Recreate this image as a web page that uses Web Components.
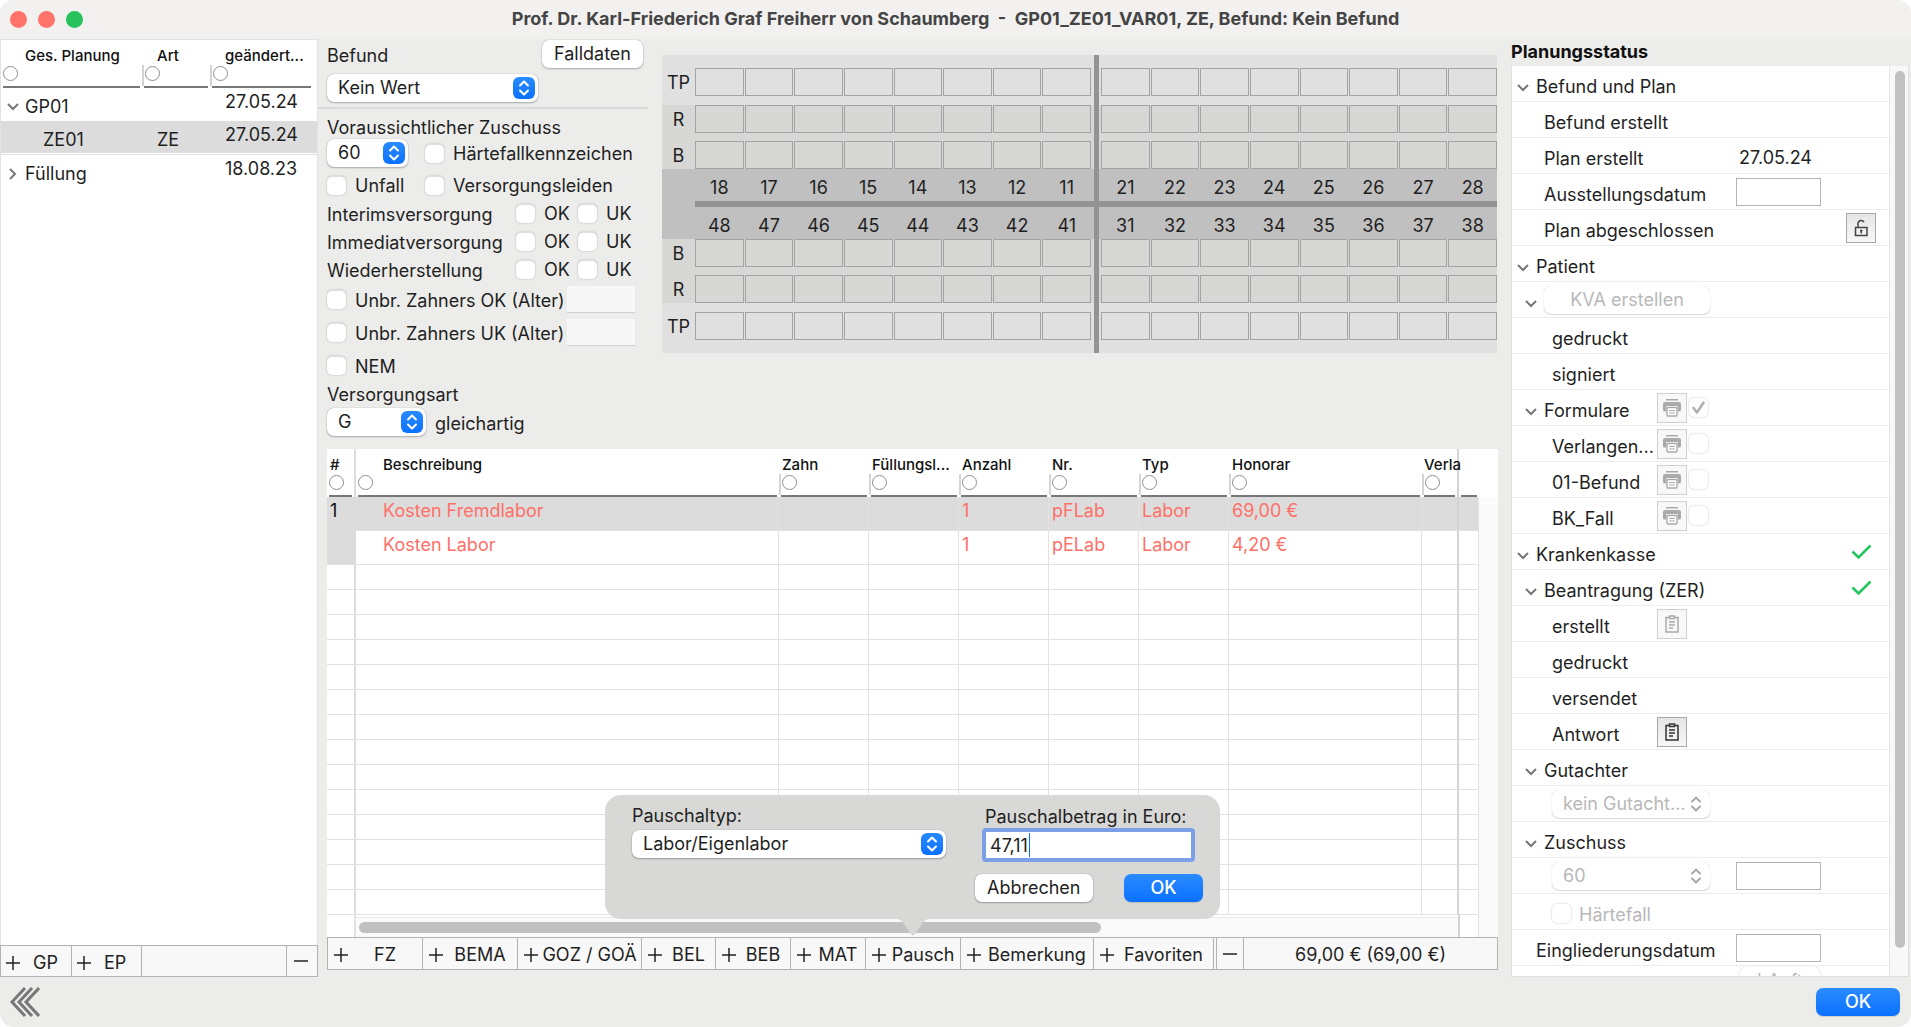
<!DOCTYPE html>
<html lang="de">
<head>
<meta charset="utf-8">
<title>Planung</title>
<style>
html, body { margin: 0; height: 100%; background: #fff; }
body { font: 18px/22px Inter, "Liberation Sans", sans-serif; color: #1f1f1f; }
</style>
</head>
<body>
<plan-window></plan-window>
<script>
const shared = `
*, *::before, *::after { box-sizing: border-box; }
button, input, select { font: inherit; color: inherit; margin: 0; }
button { border: 0; background: none; padding: 0; }
svg { display: block; flex: none; }
.btn { height: 28px; border-radius: 7px; background: #fff; box-shadow: 0 0 1px #0005, 0 1px 2px #0004; padding: 0 12px; white-space: nowrap; }
.btn.primary { background: linear-gradient(#2a8bff, #0a71ff); color: #fff; font-weight: 500; box-shadow: 0 1px 1px #0002; }
.btn:disabled { color: #b8b8b8; box-shadow: 0 0 1px #0004, 0 1px 1px #0002; }
input[type=checkbox] { appearance: none; flex: none; display: block; width: 19px; height: 19px; border-radius: 5px; background: #fff; box-shadow: inset 0 1px 1px #0002, 0 0 2px #0004; }
input[type=checkbox]:disabled { box-shadow: 0 0 2px #0004; }
:focus { outline: none; }
`;
function define(name, css, html, setup) {
  const t = document.createElement('template');
  t.innerHTML = `<style>${shared}${css}</style>${html}`;
  customElements.define(name, class extends HTMLElement {
    constructor() {
      super();
      this.attachShadow({ mode: 'open' });
    }
    connectedCallback() {
      if (this.shadowRoot.childNodes.length) return;
      this.shadowRoot.append(t.content.cloneNode(true));
      if (setup) setup.call(this, this.shadowRoot);
    }
  });
}

/* Icons */
const icons = {
  '': '',
  open: '<svg width="12" height="8" viewBox="0 0 12 8" fill="none" stroke="#777" stroke-width="2"><path d="M1 1l5 5 5-5"/></svg>',
  closed: '<svg width="12" height="12" viewBox="0 0 12 12" fill="none" stroke="#777" stroke-width="2"><path d="M3 1l5 5-5 5"/></svg>',
  printer: '<svg width="20" height="20" viewBox="0 0 20 20"><path d="M4 1h12v1.500H4z" fill="#aaa"/><path d="M3 4h14a2 2 0 0 1 2 2v6a1.500 1.500 0 0 1-1.500 1.500H16V8H4v5.500H2.500A1.500 1.500 0 0 1 1 12V6a2 2 0 0 1 2-2z" fill="#aaa"/><path d="M5 9.500h10V17a1 1 0 0 1-1 1H6a1 1 0 0 1-1-1z" fill="#fff" stroke="#aaa" stroke-width="1.400"/><path d="M7 12.500h6M7 15h6" stroke="#aaa" stroke-width="1.200"/></svg>',
  clip: '<svg width="18" height="20" viewBox="0 0 18 20" fill="none" stroke="currentColor" stroke-width="1.500"><path d="M6 3.500H3V18h12V3.500h-3"/><path d="M6.500 2h5v2.500h-5z"/><path d="M6 8h6M6 11h6M6 14h4" /></svg>',
  lock: '<svg width="18" height="20" viewBox="0 0 18 20" fill="none" stroke="#444" stroke-width="1.500"><path d="M3.500 9.500h11.500v8H3.500z"/><path d="M6 9.500V5.500A3 3 0 0 1 9 2.500c1.500 0 2.500.6 3 1.800"/><path d="M8 12.500h2.500M9.250 12.500v3"/></svg>',
  done: '<svg width="21" height="16" viewBox="0 0 21 16" fill="none" stroke="#22c55e" stroke-width="2.600"><path d="M1.500 7.500l6 6L19.500 1.500"/></svg>'
};
define('ui-icon', ':host { display: inline-flex; flex: none; align-items: center; justify-content: center; }', '', function (r) {
  r.innerHTML += icons[this.getAttribute('name') || ''];
});

/* Pop-up menu frame round a slotted select */
define('pop-select', `
:host { display: inline-grid; position: relative; flex: none; }
::slotted(select) { appearance: none; height: 28px; width: 100%; border: 0; border-radius: 7px; background: #fff; box-shadow: 0 0 1px #0005, 0 1px 2px #0004; padding: 0 20px 0 11px; font: inherit; color: inherit; text-overflow: ellipsis; opacity: 1; outline: none; }
.knob { position: absolute; right: 3px; top: 3px; width: 22px; height: 22px; border-radius: 6px; background: linear-gradient(#2a8bff, #0a71ff); color: #fff; display: grid; place-items: center; pointer-events: none; }
:host([dim]) { color: #b8b8b8; }
:host([dim]) .knob { background: none; color: #aaa; }
:host([dim]) ::slotted(select) { box-shadow: 0 0 1px #0004, 0 1px 1px #0002; }
`, `<slot></slot><span class="knob"><svg width="12" height="16" viewBox="0 0 12 16" fill="none" stroke="currentColor" stroke-width="2" stroke-linecap="round" stroke-linejoin="round"><path d="M2 5.500L6 1.500l4 4M2 10.500l4 4 4-4"/></svg></span>`);

/* Tick box with its caption */
define('check-field', `
:host { display: inline-flex; }
label { display: flex; align-items: center; gap: 9px; white-space: nowrap; }
label span { padding-top: 2px; }
`, `<label><input type="checkbox"><span><slot></slot></span></label>`);

/* Column heading with its filter ring */
define('col-head', `
:host { display: block; height: 48px; padding: 7px 0 0; font: 500 15px/18px Inter, "Liberation Sans", sans-serif; color: #111; text-align: left; white-space: nowrap; }
.label { height: 18px; padding-left: var(--label, 3px); }
.ring { height: 21px; padding: 1px 0 0 1px; border-left: 2px solid #d4d4d4; }
.ring i { display: block; width: 15px; height: 15px; border: 1px solid #8f8f8f; border-radius: 50%; }
.line { height: 2px; background: #777; margin: 0 2px; }
:host([first]) .ring { border-color: transparent; padding-left: 0; }
:host([bare]) i { display: none; }
:host([bare]) .ring { border-color: transparent; }
`, `<div class="label"><slot></slot></div><div class="ring"><i></i></div><div class="line"></div>`);

define('title-bar', `
:host { display: flex; align-items: center; height: 39px; background: #f2f1f0; padding: 0 10px; flex: none; }
.lights { display: flex; gap: 11px; flex: 1; }
.lights i { width: 17px; height: 17px; border-radius: 50%; background: #ff736a; }
.lights i:last-child { background: #28c25c; }
h1 { margin: 0; font-size: 18px; line-height: 22px; font-weight: 700; color: #444; white-space: pre; padding-bottom: 2px; }
.end { flex: 1; }
`, `<div class="lights"><i></i><i></i><i></i></div><h1><slot></slot></h1><div class="end"></div>`);

define('plus-sign', `:host { display: block; width: 14px; height: 14px; flex: none; } :host([minus]) .v { display: none; }`,
`<svg width="14" height="14" viewBox="0 0 14 14" stroke="#222" stroke-width="1.500"><path d="M0 7h14"/><path class="v" d="M7 0v14"/></svg>`);

define('plan-list', `
:host { display: flex; flex-direction: column; width: 318px; flex: none; }
.pane { flex: 1; background: #fff; border: 1px solid #e2e2e2; border-bottom: 0; }
table { width: 100%; border-spacing: 0; table-layout: fixed; }
td, th { padding: 0; font-weight: 400; }
td { height: 33px; vertical-align: top; white-space: nowrap; }
td:first-child > div { display: flex; align-items: center; padding: 8px 0 0 6px; gap: 6px; }
td:first-child ui-icon { width: 12px; }
td:nth-child(2) { padding: 8px 0 0 15px; }
td:nth-child(3) { padding: 3px 0 0 15px; }
tr.sel td { background: #dcdcdc; height: 34px; border-bottom: 1px solid #e2e2e2; box-shadow: inset 0 -1px #fff; }
td .kid { padding-left: 18px; }
.bar { display: grid; grid-template-columns: 71px 70px 1fr 30px; height: 32px; border: 1px solid #b2b2b2; background: #f8f8f8; }
.bar > * { border-right: 1px solid #b2b2b2; display: flex; align-items: center; gap: 13px; padding: 3px 0 0 5px; }
.bar > :last-child { border: 0; padding: 0 0 0 7px; }
`, `
<div class="pane"><table>
<colgroup><col style="width:141px"><col style="width:68px"><col style="width:103px"><col></colgroup>
<thead><tr><th><col-head first style="--label:24px">Ges. Planung</col-head></th><th><col-head style="--label:15px">Art</col-head></th><th><col-head style="--label:15px">geändert...</col-head></th><th><col-head bare></col-head></th></tr></thead>
<tbody>
<tr><td><div><ui-icon name="open"></ui-icon>GP01</div></td><td></td><td>27.05.24</td><td></td></tr>
<tr class="sel"><td><div><ui-icon></ui-icon><span class="kid">ZE01</span></div></td><td>ZE</td><td>27.05.24</td><td></td></tr>
<tr><td><div><ui-icon name="closed"></ui-icon>Füllung</div></td><td></td><td>18.08.23</td><td></td></tr>
</tbody></table></div>
<div class="bar"><button><plus-sign></plus-sign>GP</button><button><plus-sign></plus-sign>EP</button><span></span><button aria-label="Entfernen"><plus-sign minus></plus-sign></button></div>`);

define('case-form', `
:host { display: block; width: 330px; flex: none; }
.r { display: flex; align-items: center; padding-left: 9px; white-space: nowrap; }
.h28 { height: 28px; } .h33 { height: 33px; }
.push { margin-left: auto; }
.top { margin-top: 1px; padding-right: 5px; }
.top label { padding-top: 3px; }
.rule { margin-top: 6px; padding-bottom: 5px; border-bottom: 2px solid #d9d9d9; }
.sub { height: 30px; padding-top: 7px; }
.two { display: grid; grid-template-columns: 98px 1fr; }
.low { height: 32px; padding-top: 4px; }
.three { display: grid; grid-template-columns: 189px 62px 1fr; }
.three > span { padding-top: 3px; }
.alt { display: grid; grid-template-columns: 240px 68px; }
.alt input { height: 27px; width: 68px; border: 0; border-bottom: 1px solid #d0d0d0; background: #f7f7f7; }
.kind { height: 25px; }
.art { gap: 9px; margin-top: 1px; }
.art span { padding-top: 4px; }
`, `
<div class="r h28 top"><label for="befund">Befund</label><button class="btn push">Falldaten</button></div>
<div class="r rule"><pop-select style="width:211px"><select id="befund"><option>Kein Wert</option></select></pop-select></div>
<div class="r sub"><label for="zus">Voraussichtlicher Zuschuss</label></div>
<div class="r h28 two"><pop-select style="width:81px"><select id="zus"><option>60</option></select></pop-select><check-field>Härtefallkennzeichen</check-field></div>
<div class="r low two"><check-field>Unfall</check-field><check-field>Versorgungsleiden</check-field></div>
<div class="r h28 three"><span>Interimsversorgung</span><check-field>OK</check-field><check-field>UK</check-field></div>
<div class="r h28 three"><span>Immediatversorgung</span><check-field>OK</check-field><check-field>UK</check-field></div>
<div class="r h28 three"><span>Wiederherstellung</span><check-field>OK</check-field><check-field>UK</check-field></div>
<div class="r h33 alt"><check-field>Unbr. Zahners OK (Alter)</check-field><input aria-label="Alter OK"></div>
<div class="r h33 alt"><check-field>Unbr. Zahners UK (Alter)</check-field><input aria-label="Alter UK"></div>
<div class="r h33"><check-field>NEM</check-field></div>
<div class="r kind"><label for="art">Versorgungsart</label></div>
<div class="r h28 art"><pop-select style="width:99px"><select id="art"><option>G</option></select></pop-select><span>gleichartig</span></div>
`);

define('tooth-chart', `
:host { display: block; flex: 1; margin: 16px 1px 0 14px; position: relative; align-self: flex-start; }
.row { display: grid; grid-template-columns: 33px 1fr 1fr; align-items: center; height: 28px; }
.row b { font-weight: 400; text-align: center; padding-top: 2px; }
.half { display: grid; grid-template-columns: repeat(8, 1fr); gap: 1px; height: 100%; align-items: center; text-align: center; }
.row .half:nth-child(2) { margin-right: 5px; }
.row .half:nth-child(3) { margin-left: 5px; }
.half i { height: 28px; border: 1px solid #a3a3a3; }
.tp { background: #e0e0e0; padding: 13px 0 9px; }
.tp.low { padding: 9px 0 13px; }
.rb { background: #d7d7d6; display: grid; gap: 8px; }
.mid { background: #c0c0c0; }
.mid .row { height: 32px; padding-top: 5px; }
.bar { height: 6px; margin-left: 33px; background: #939393; }
.axis { position: absolute; top: 0; bottom: 0; left: calc(50% + 14px); width: 5px; background: #939393; }
`, '', function (r) {
  const cells = '<i></i>'.repeat(8);
  const line = n => `<div class="row"><b>${n}</b><div class="half">${cells}</div><div class="half">${cells}</div></div>`;
  const nums = (a, b) => {
    const n = [1, 2, 3, 4, 5, 6, 7, 8];
    return `<div class="row"><b></b><div class="half">${[...n].reverse().map(i => `<span>${a}${i}</span>`).join('')}</div><div class="half">${n.map(i => `<span>${b}${i}</span>`).join('')}</div></div>`;
  };
  r.innerHTML += `<div class="tp">${line('TP')}</div><div class="rb">${line('R')}${line('B')}</div><div class="mid">${nums(1, 2)}<div class="bar"></div>${nums(4, 3)}</div><div class="rb">${line('B')}${line('R')}</div><div class="tp low">${line('TP')}</div><div class="axis"></div>`;
});

define('cost-table', `
:host { display: flex; flex-direction: column; flex: 1; background: #fff; min-height: 0; }
.main { display: flex; }
table { flex: 1; width: 100%; border-spacing: 0; table-layout: fixed; }
.gutter { width: 19px; margin-top: 48px; background: #fafafa; }
th, td { padding: 0; font-weight: 400; }
td { height: 25px; border-right: 1px solid #e2e2e2; border-bottom: 1px solid #e2e2e2; white-space: nowrap; }
tr.e td { height: 34px; vertical-align: top; padding: 3px 0 0 3px; color: #ff7068; }
tr.e td.n { color: #111; background: #dcdcdc; }
td.d.d { padding-left: 27px; }
tr.sel td { background: #dcdcdc; }
td.n, th.n { border-right: 2px solid #dcdcdc; }
td.v, th.v { border-right: 2px solid #d4d4d4; }
.scroll { flex: 1; display: flex; }
.scroll .l { width: 29px; border-right: 2px solid #e2e2e2; }
.scroll .t { flex: 1; background: #fafafa; border-top: 1px solid #e8e8e8; margin-top: 2px; padding: 4px 0 0 3px; }
.scroll .t i { display: block; width: 67.500%; height: 11px; border-radius: 6px; background: #c1c1c1; }
.scroll .m { width: 21px; border-left: 2px solid #d4d4d4; border-right: 1px solid #e2e2e2; }
.scroll .g { width: 19px; background: #fafafa; }
`, '', function (r) {
  const heads = ['Zahn', 'Füllungsl...', 'Anzahl', 'Nr.', 'Typ', 'Honorar'];
  const row = (a, cls = '', n = '') => `<tr class="${cls}">${n}<td class="d">${a[0]}</td><td></td><td></td>${a.slice(1).map(x => `<td>${x}</td>`).join('')}<td class="v"></td><td></td></tr>`;
  r.innerHTML += `<div class="main"><table>
<colgroup><col style="width:29px"><col><col style="width:90px"><col style="width:90px"><col style="width:90px"><col style="width:90px"><col style="width:90px"><col style="width:193px"><col style="width:37px"><col style="width:20px"></colgroup>
<thead><tr><th class="n"><col-head first>#</col-head></th><th><col-head first style="--label:27px">Beschreibung</col-head></th>${heads.map(h => `<th><col-head>${h}</col-head></th>`).join('')}<th class="v"><col-head style="--label:2px">Verla</col-head></th><th><col-head bare></col-head></th></tr></thead>
<tbody>${row(['Kosten Fremdlabor', '1', 'pFLab', 'Labor', '69,00 €'], 'e sel', '<td class="n" rowspan="2">1</td>')}${row(['Kosten Labor', '1', 'pELab', 'Labor', '4,20 €'], 'e')}${row(['', '', '', '', ''], '', '<td class="n"></td>').repeat(14)}</tbody></table><div class="gutter"></div></div>
<div class="scroll"><div class="l"></div><div class="t"><i></i></div><div class="m"></div><div class="g"></div></div>`;
});

define('flat-fee', `
:host { display: flex; justify-content: space-between; width: 615px; height: 124px; position: absolute; bottom: calc(100% + 19px); left: 50%; margin-left: -308px; border-radius: 16px; background: #d8d8d6; padding: 10px 17px 0 27px; text-align: left; }
.tail { position: absolute; top: 100%; left: 50%; margin-left: -18px; margin-top: -1px; }
.a { display: flex; flex-direction: column; gap: 3px; width: 314px; }
.b { width: 228px; }
.b label { display: block; padding: 1px 0 0 10px; white-space: nowrap; }
.b input { display: block; width: 213px; height: 34px; margin-left: 7px; border: 4px solid #7ca0e8; border-radius: 4px; padding: 0 4px; caret-color: transparent; background: linear-gradient(#0a71ff, #0a71ff) 43px 1px / 1px 24px no-repeat #fff; }
.acts { display: flex; justify-content: space-between; padding-top: 12px; }
.acts .primary { width: 79px; padding: 0; }
`, `
<div class="a"><label for="typ">Pauschaltyp:</label><pop-select><select id="typ"><option>Labor/Eigenlabor</option></select></pop-select></div>
<div class="b"><label for="sum">Pauschalbetrag in Euro:</label><input id="sum" value="47,11"><div class="acts"><button class="btn">Abbrechen</button><button class="btn primary">OK</button></div></div>
<svg class="tail" width="36" height="18" viewBox="0 0 36 18"><path d="M0 0h36v1c-5 0-7 2-9 5l-7 10q-2 3-4 0L9 6C7 3 5 1 0 1z" fill="#d8d8d6"/></svg>`);

define('item-bar', `
:host { display: flex; height: 33px; border: 1px solid #b2b2b2; background: #f8f8f8; flex: none; }
.c { border-right: 1px solid #b2b2b2; position: relative; display: flex; }
.c button { flex: 1; display: flex; align-items: center; padding: 3px 0 0 6px; white-space: nowrap; }
.c button[aria-label] { padding-top: 0; }
.c button span { flex: 1; text-align: center; }
.gap { width: 3px; border-right: 1px solid #b2b2b2; }
output { flex: 1; display: flex; align-items: center; justify-content: center; padding-top: 3px; }
`, '', function (r) {
  const items = [['FZ', 95], ['BEMA', 95], ['GOZ / GOÄ', 124], ['BEL', 74], ['BEB', 75], ['MAT', 75], ['Pausch', 95], ['Bemerkung', 133], ['Favoriten', 120]];
  r.innerHTML += items.map(([n, w]) => `<div class="c" style="width:${w}px"><button><plus-sign></plus-sign><span>${n}</span></button>${n === 'Pausch' ? '<flat-fee></flat-fee>' : ''}</div>`).join('') + `<div class="gap"></div><div class="c" style="width:27px"><button aria-label="Entfernen"><plus-sign minus></plus-sign></button></div><output>69,00 € (69,00 €)</output>`;
});

define('status-row', `
:host { display: grid; grid-template-columns: 145px 79px 1fr auto; height: 36px; border-bottom: 1px solid #ededed; align-items: center; padding-right: 13px; flex: none; }
.name { display: flex; align-items: center; gap: 7px; padding: 6px 0 0 var(--in, 5px); white-space: nowrap; width: 0; }
.name ui-icon { width: 12px; margin-top: 2px; }
:host([level="1"]) .name { --in: 13px; }
:host([level="2"]) .name { --in: 21px; }
.mid { display: flex; align-items: center; gap: 2px; }
`, '', function (r) {
  r.innerHTML += `<div class="name"><ui-icon name="${this.hasAttribute('open') ? 'open' : ''}"></ui-icon><slot></slot></div><div class="mid"><slot name="tool"></slot></div><slot name="value"><span></span></slot><slot name="end"></slot>`;
});

define('status-panel', `
:host { display: flex; flex-direction: column; width: 398px; flex: none; margin-right: 2px; }
h2 { margin: 0; font-size: 18px; line-height: 22px; font-weight: 700; height: 27px; padding-top: 2px; color: #111; }
.box { flex: 1 1 0; min-height: 0; display: flex; border: 1px solid #e0e0e0; border-top: 0; background: #fff; }
.rows { flex: 1; overflow: hidden; display: flex; flex-direction: column; }
.track { width: 19px; background: #f8f8f8; border-left: 1px solid #e6e6e6; padding: 5px 3px 28px 5px; display: flex; }
.track i { flex: 1; border-radius: 6px; background: #c1c1c1; }
.date { width: 85px; height: 28px; border: 1px solid #b4b4b4; background: #fff; }
.sq { width: 30px; height: 30px; border: 1px solid #a8a8a8; background: linear-gradient(#e6e6e6, #f7f7f7); display: grid; place-items: center; color: #333; flex: none; }
.sq:disabled { border-color: #d0d0d0; background: #f8f8f8; color: #aaa; }
.val { padding: 5px 0 0 3px; }
.kva { width: 166px; flex: none; }
.tick { display: grid; }
.tick > * { grid-area: 1 / 1; }
.dim { display: flex; gap: 8px; color: #b8b8b8; align-items: center; }
.dim input { margin-top: -3px; }
.ok { margin-right: 4px; }
pop-select, .kva { margin-top: -5px; }
pop-select { width: 158px; }
.more { width: 82px; padding: 0; margin: -5px 0 0 3px; }
`, '', function (r) {
  const sq = (i, l, d) => `<button class="sq" slot="tool" aria-label="${l}" ${d ? 'disabled' : ''}><ui-icon name="${i}"></ui-icon></button>`;
  const form = (n, l, o, c) => `<status-row level="${l}" ${o}>${n}${sq('printer', n + ' drucken', 1)}<span class="tick" slot="tool"><input type="checkbox" disabled aria-label="${n}">${c ? '<svg width="19" height="19" viewBox="0 0 19 19" fill="none" stroke="#b0b0b0" stroke-width="2.600" stroke-linecap="round" stroke-linejoin="round"><path d="M4.500 10l3.500 4.500L14.500 4.500"/></svg>' : ''}</span></status-row>`;
  r.innerHTML += `<h2>Planungsstatus</h2><div class="box"><div class="rows">
<status-row open>Befund und Plan</status-row>
<status-row level="1">Befund erstellt</status-row>
<status-row level="1">Plan erstellt<span slot="value" class="val">27.05.24</span></status-row>
<status-row level="1"><label for="ausst">Ausstellungsdatum</label><input class="date" id="ausst" slot="value"></status-row>
<status-row level="1">Plan abgeschlossen<button class="sq" slot="end" aria-label="Plan abschließen"><ui-icon name="lock"></ui-icon></button></status-row>
<status-row open>Patient</status-row>
<status-row level="1" open><button class="btn kva" disabled>KVA erstellen</button></status-row>
<status-row level="2">gedruckt</status-row>
<status-row level="2">signiert</status-row>
${form('Formulare', 1, 'open', 1)}${form('Verlangen...', 2, '')}${form('01-Befund', 2, '')}${form('BK_Fall', 2, '')}
<status-row open>Krankenkasse<ui-icon name="done" slot="end" class="ok"></ui-icon></status-row>
<status-row level="1" open>Beantragung (ZER)<ui-icon name="done" slot="end" class="ok"></ui-icon></status-row>
<status-row level="2">erstellt${sq('clip', 'erstellt', 1)}</status-row>
<status-row level="2">gedruckt</status-row>
<status-row level="2">versendet</status-row>
<status-row level="2">Antwort${sq('clip', 'Antwort')}</status-row>
<status-row level="1" open>Gutachter</status-row>
<status-row level="2"><pop-select dim><select disabled aria-label="Gutachter"><option>kein Gutacht...</option></select></pop-select></status-row>
<status-row level="1" open>Zuschuss</status-row>
<status-row level="2"><pop-select dim><select disabled aria-label="Zuschuss"><option>60</option></select></pop-select><input class="date" slot="value" aria-label="Zuschuss Betrag"></status-row>
<status-row level="2"><label class="dim"><input type="checkbox" disabled>Härtefall</label></status-row>
<status-row><label for="eing">Eingliederungsdatum</label><input class="date" id="eing" slot="value"></status-row>
<status-row><button class="btn more" slot="value" disabled>bAuft</button></status-row>
</div><div class="track"><i></i></div></div>`;
});

define('plan-window', `
:host { display: flex; flex-direction: column; height: 100vh; min-height: 1020px; background: #ececea; border-radius: 14px; overflow: hidden; }
main { flex: 1; display: flex; min-height: 0; }
.center { flex: 1; display: flex; flex-direction: column; min-width: 0; margin: 0 13px 7px 0; }
.upper { display: flex; height: 410px; flex: none; }
.lower { flex: 1; display: flex; flex-direction: column; margin-left: 9px; }
footer { height: 50px; flex: none; display: flex; align-items: center; justify-content: space-between; padding: 0 11px 0 10px; }
footer .btn { width: 84px; padding: 0; }
`, `
<title-bar>Prof. Dr. Karl-Friederich Graf Freiherr von Schaumberg  -  GP01_ZE01_VAR01, ZE, Befund: Kein Befund</title-bar>
<main><plan-list></plan-list>
<div class="center"><div class="upper"><case-form></case-form><tooth-chart></tooth-chart></div>
<div class="lower"><cost-table></cost-table><item-bar></item-bar></div></div>
<status-panel></status-panel></main>
<footer><button aria-label="Zurück"><svg width="30" height="30" viewBox="0 0 30 30" fill="none" stroke="#777" stroke-width="3"><path d="M15 1L2 15l13 14M22 1L9 15l13 14M29 1L16 15l13 14"/></svg></button><button class="btn primary">OK</button></footer>`);
</script>
</body>
</html>
